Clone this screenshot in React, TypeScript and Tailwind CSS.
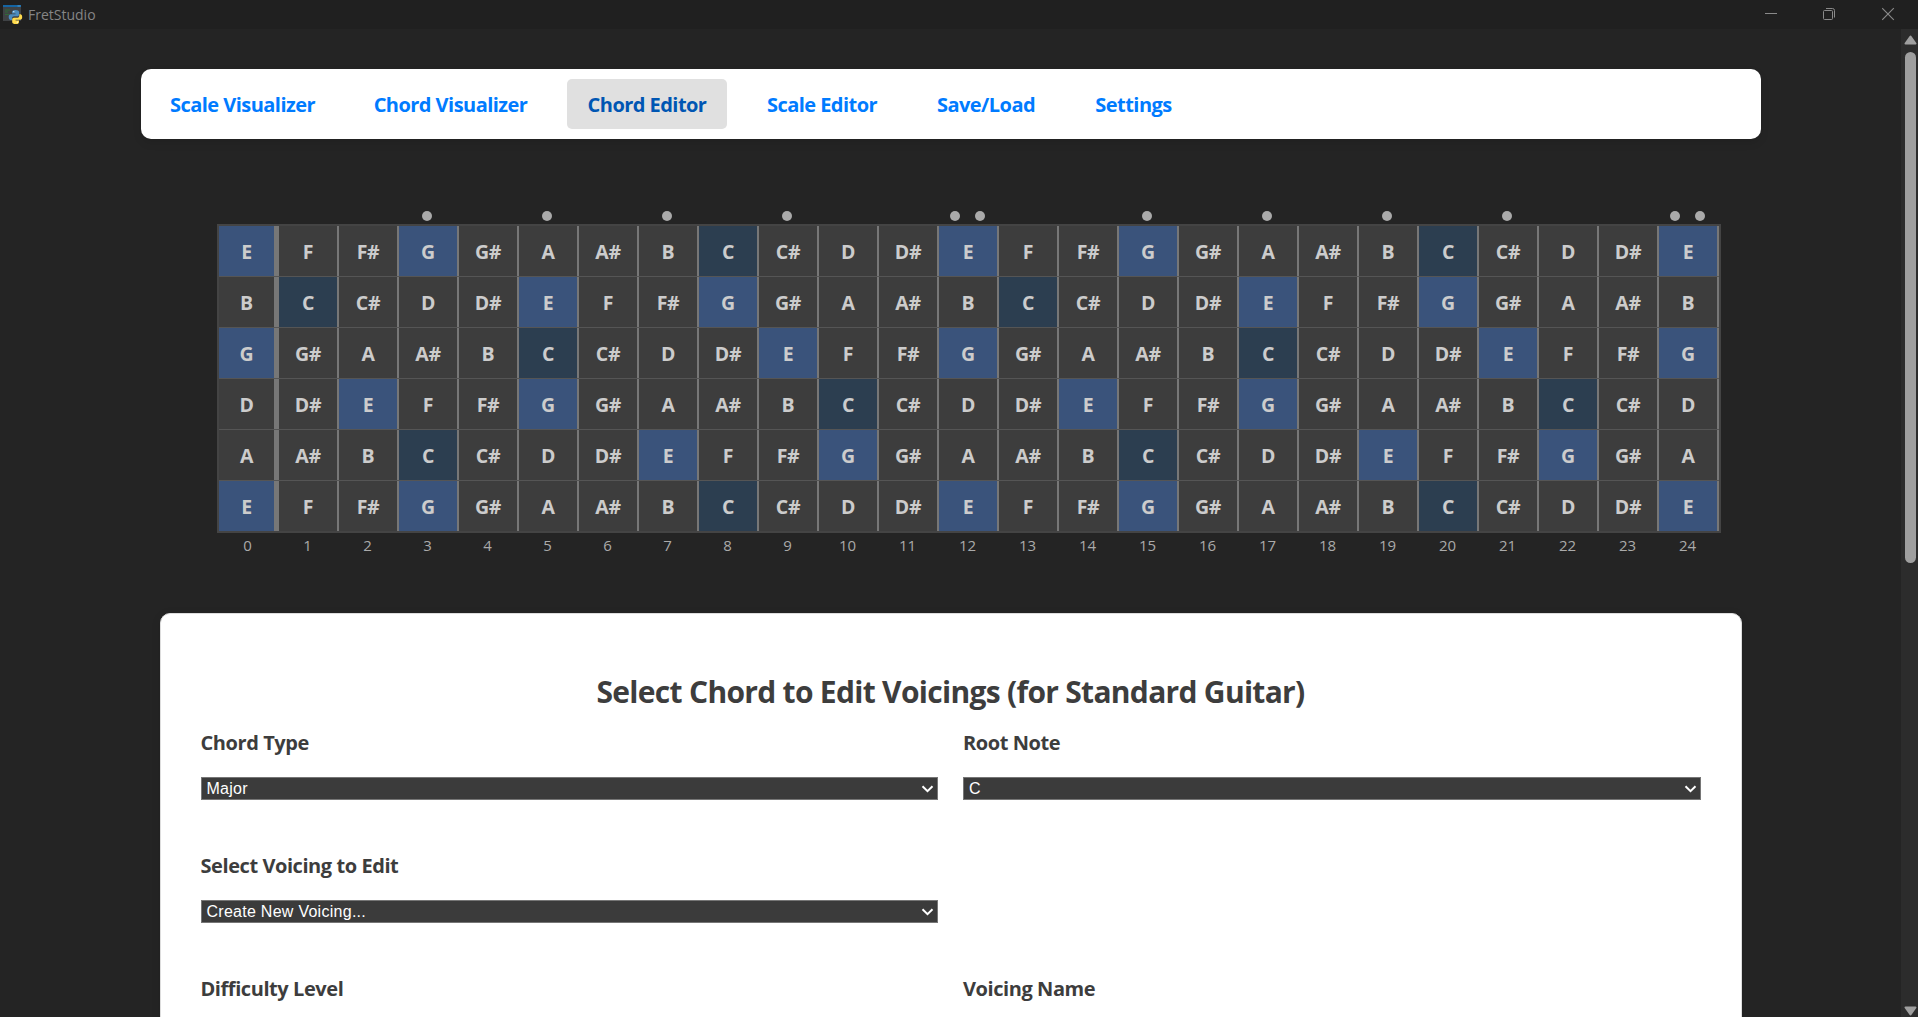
import React from "react";

const NOTES = ["C", "C#", "D", "D#", "E", "F", "F#", "G", "G#", "A", "A#", "B"];
const TUNING = [4, 11, 7, 2, 9, 4];
const FRETS = Array.from({ length: 25 }, (_, i) => i);
const SINGLE_MARKS = [3, 5, 7, 9, 15, 17, 19, 21];
const DOUBLE_MARKS = [12, 24];

const TABS = [
  { label: "Scale Visualizer", width: "w-[183px]" },
  { label: "Chord Visualizer", width: "w-[193px]" },
  { label: "Chord Editor", width: "w-[160px]", active: true },
  { label: "Scale Editor", width: "w-[150px]" },
  { label: "Save/Load", width: "w-[138px]" },
  { label: "Settings", width: "w-[117px]" },
];

function AppIcon() {
  return (
    <svg width="20" height="20" viewBox="0 0 20 20" className="shrink-0">
      <rect x="0" y="0" width="18" height="16" fill="#3f4245" />
      <rect x="0" y="0" width="18" height="2" fill="#1565a3" />
      <path d="M14.5 1h3" stroke="#5fa6d8" strokeWidth="0.8" />
      <path d="M2 5h5M2 7h3M2 9.5h4" stroke="#2f6b37" strokeWidth="1" />
      <path
        d="M12.3 5c-2.6 0-3.2 1-3.2 2.1v1.5h3.4v.6H7.8C6.400 9.200 5.700 10.200 5.700 12s.8 2.900 1.900 2.900h1.400v-1.700c0-1.200 1-2 2.100-2h3.200c1 0 1.800-.8 1.800-1.800V7.100C16.100 5.700 14.700 5 12.300 5z"
        fill="#4b8bbe"
      />
      <path
        d="M12.800 19c2.600 0 3.200-1 3.200-2.100v-1.500h-3.400v-.6h4.700c1.200 0 1.900-1 1.900-2.800s-.8-2.800-1.900-2.800h-1v1.500c0 1.200-1 2.100-2.100 2.100H11c-1 0-1.800.8-1.800 1.800v2.300c0 1.300 1.300 2.100 3.600 2.100z"
        fill="#ffdb4d"
      />
      <circle cx="10.800" cy="6.700" r="0.600" fill="#fff" />
      <circle cx="14.300" cy="17.200" r="0.600" fill="#fff" />
    </svg>
  );
}

function TitleBar() {
  return (
    <header className="flex h-[29px] shrink-0 items-start justify-between bg-[#202020]">
      <div className="flex items-center pt-[5px] pl-[3px]">
        <AppIcon />
        <span className="ml-[5px] text-[14px] leading-5 text-[#858585]">FretStudio</span>
      </div>
      <div className="flex pt-[7px] pr-[23px]">
        <svg width="13" height="14" viewBox="0 0 13 14" className="mr-[45px]">
          <path d="M0 6.500h12" stroke="#8a8a8a" />
        </svg>
        <svg width="13" height="14" viewBox="0 0 13 14" fill="none" stroke="#8a8a8a" className="mr-[46px]">
          <rect x="0.500" y="3.500" width="9" height="9" rx="1" />
          <path d="M3 1.500h6.500q2 0 2 2v7" />
        </svg>
        <svg width="13" height="14" viewBox="0 0 13 14" stroke="#8a8a8a" strokeWidth="1.100">
          <path d="M0.200 1.200l11.600 11.600M11.800 1.200l-11.600 11.600" />
        </svg>
      </div>
    </header>
  );
}

function ScrollBar() {
  return (
    <div className="flex w-[17px] shrink-0 flex-col items-center bg-[#2c2c2c] pl-[2px]">
      <svg width="13" height="10" viewBox="0 0 13 10" className="mt-[6px] shrink-0">
        <path d="M6.500 1.500L11.500 8.500H1.500z" fill="#9f9f9f" stroke="#9f9f9f" strokeWidth="2" strokeLinejoin="round" />
      </svg>
      <div className="mt-[7px] h-[511px] w-[11px] shrink-0 rounded-full bg-[#9f9f9f]" />
      <svg width="13" height="10" viewBox="0 0 13 10" className="mt-auto mb-px shrink-0">
        <path d="M6.500 8.500L11.500 1.500H1.500z" fill="#9f9f9f" stroke="#9f9f9f" strokeWidth="2" strokeLinejoin="round" />
      </svg>
    </div>
  );
}

function NavBar() {
  return (
    <nav className="flex h-[70px] w-[1620px] shrink-0 items-center gap-5 rounded-[10px] bg-white px-[10px] shadow-[0_4px_8px_rgba(0,0,0,0.1)]">
      {TABS.map((t) => (
        <a
          key={t.label}
          className={`${t.width} flex h-[50px] items-center justify-center rounded-[5px] pt-[2px] pl-px text-[20px] font-bold tracking-[-0.540px] whitespace-nowrap ${
            t.active ? "bg-[#e0e0e0] text-[#0056b3]" : "text-[#007bff]"
          }`}
        >
          {t.label}
        </a>
      ))}
    </nav>
  );
}

function cellColor(note: string) {
  if (note === "C") return "bg-[#2c3e50]";
  if (note === "E" || note === "G") return "bg-[#3a537b]";
  return "bg-[#3d3d3d]";
}

function Dot() {
  return <span className="size-[10px] rounded-full bg-[#aaaaaa]" />;
}

function Fretboard() {
  return (
    <section className="w-[1504px]">
      <div className="flex h-[13px] items-start">
        {FRETS.map((f) => (
          <div key={f} className="flex w-[60px] justify-center gap-[15px]">
            {SINGLE_MARKS.includes(f) && <Dot />}
            {DOUBLE_MARKS.includes(f) && (
              <>
                <Dot />
                <Dot />
              </>
            )}
          </div>
        ))}
      </div>
      <div className="border-2 border-[#444444]">
        {TUNING.map((open, s) => (
          <div key={s} className="flex border-b border-[#555555] last:border-b-0">
            {FRETS.map((f) => {
              const note = NOTES[(open + f) % 12];
              return (
                <div
                  key={f}
                  className={`flex h-[50px] w-[60px] items-center justify-center border-[#777777] pt-px text-[19.500px] font-bold tracking-[-0.300px] text-[#cccccc] ${
                    f === 0 ? "border-r-[5px]" : "border-r-2"
                  } ${cellColor(note)}`}
                >
                  {note}
                </div>
              );
            })}
          </div>
        ))}
      </div>
      <div className="flex">
        {FRETS.map((f) => (
          <div key={f} className="w-[60px] pl-px text-center text-[15px] leading-[24px] tracking-[-0.200px] text-[#aaaaaa]">
            {f}
          </div>
        ))}
      </div>
    </section>
  );
}

function Field({ label, value }: { label: string; value?: string }) {
  return (
    <div className="h-[123px]">
      <div className="h-[48px] text-[20px] leading-[27px] font-bold tracking-[-0.430px] text-[#3d3d3d]">{label}</div>
      {value && (
        <div className="flex h-[23px] items-center justify-between border border-[#767676] bg-[#3b3b3b] pr-[3px] pl-[5px] font-['Liberation_Sans',Arial,sans-serif] text-[16px] tracking-[0.270px] text-white">
          <span>{value}</span>
          <svg width="13" height="8" viewBox="0 0 13 8" fill="none" stroke="#fff" strokeWidth="2">
            <path d="M1.500 1.200L6.500 6.200L11.500 1.200" />
          </svg>
        </div>
      )}
    </div>
  );
}

export default function App() {
  return (
    <div className="flex h-[1017px] w-[1918px] flex-col overflow-hidden bg-[#242424] font-['Open_Sans','Noto_Sans',sans-serif]">
      <TitleBar />
      <div className="flex min-h-0 flex-1">
        <main className="flex min-w-0 flex-1 flex-col items-center overflow-hidden pt-[40px]">
          <NavBar />
          <div className="mt-[72px] ml-[37px] shrink-0 self-center">
            <Fretboard />
          </div>
          <section className="mt-[56px] h-[620px] w-[1582px] shrink-0 rounded-[10px] border border-[#dddddd] bg-white px-[40px] pt-[58px] shadow-[0_2px_10px_rgba(0,0,0,0.100)]">
            <h2 className="text-center text-[30px] leading-[40px] font-bold tracking-[-0.700px] text-[#3d3d3d]">
              Select Chord to Edit Voicings (for Standard Guitar)
            </h2>
            <div className="mt-[17px] grid grid-cols-[737px_737.500px] gap-x-[25.500px]">
              <Field label="Chord Type" value="Major" />
              <Field label="Root Note" value="C" />
              <Field label="Select Voicing to Edit" value="Create New Voicing..." />
              <div />
              <Field label="Difficulty Level" />
              <Field label="Voicing Name" />
            </div>
          </section>
        </main>
        <ScrollBar />
      </div>
    </div>
  );
}
